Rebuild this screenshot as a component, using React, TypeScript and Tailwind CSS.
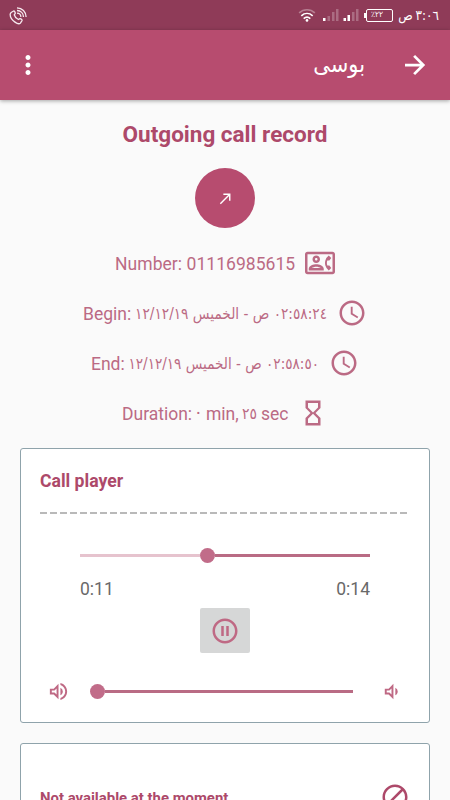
import type { ReactNode } from "react";
import {
  MdBlock,
  MdCallMade,
  MdHourglassEmpty,
  MdMoreVert,
  MdOutlineContactPhone,
  MdPauseCircleOutline,
  MdOutlineVolumeDown,
  MdOutlineVolumeUp,
  MdAccessTime,
} from "react-icons/md";

function Arabic({ children, className }: { children: ReactNode; className: string }) {
  return (
    <span dir="rtl" className={`inline-block whitespace-nowrap font-['DejaVu_Sans',sans-serif] ${className}`}>
      {children}
    </span>
  );
}

function StatusBar() {
  return (
    <div className="flex h-[30px] shrink-0 items-center bg-[#8f3b58] text-white">
      <svg className="ml-[9px] h-[19px] w-[19px]" viewBox="0 0 19 19" fill="none" stroke="#f6e9ee" strokeWidth="1.3">
        <path d="M2.5 6.2 4.6 5c.9-.3 1.8 1.7 1.6 2.5l-1 1.3c.6 2.1 2.2 3.9 4.2 4.7l1.6-.9c.8-.2 2.4 1.2 2 2l-1.600 2.500c-1 1-3.600.3-5.400-1C3.200 14 1 11 1.200 8.200c.1-.8.6-1.500 1.300-2z" strokeLinejoin="round" />
        <path d="M8 7.200c2.200.1 3.800 1.700 3.900 3.800M8 4.500c3.800.1 6.400 2.800 6.500 6.500M8 1.800c5.300.2 8.900 3.900 9.100 9.100" />
      </svg>
      <svg className="ml-[270px] h-[15px] w-[18px] shrink-0" viewBox="0 0 19 15" fill="none" stroke="#fff" strokeWidth="1.700">
        <path d="M1.200 4.800c4.700-4.500 11.900-4.500 16.600 0" opacity=".35" />
        <path d="M3.500 7.800c3.600-3.200 8.400-3.200 12 0M6 10.800c2.200-1.900 4.800-1.900 7 0" />
        <circle cx="9.500" cy="12.700" r="1.400" fill="#fff" stroke="none" />
      </svg>
      <svg className="ml-[6.500px] h-[14px] w-[36px] shrink-0" viewBox="0 0 36 14" fill="#fff">
        <path d="M0 10h2.500v3H0zM20.500 10H23v3h-2.500zM24.500 7H27v6h-2.500z" />
        <path opacity=".25" d="M4.500 8H7v5H4.500zM9 4h2.500v9H9zM13 1h2.500v12H13zM29 4h2.500v9H29zM33 1h2.500v12H33z" />
      </svg>
      <div className="ml-[5px] h-[5px] w-[2px] shrink-0 bg-white" />
      <div className="flex h-[13px] w-[27px] shrink-0 items-center justify-center rounded-[2px] border-[1.5px] border-white pr-1">
        <Arabic className="scale-y-[1.1] text-[7.500px] leading-none">٢٢٪</Arabic>
      </div>
      <div className="flex-1" />
      <Arabic className="mr-[11px] scale-y-[1.15] text-[12px] leading-[30px] [word-spacing:-1px]">٣:٠٦ ص</Arabic>
    </div>
  );
}

function Toolbar() {
  return (
    <header className="flex h-[70px] shrink-0 items-center bg-[#b74c6f] text-white shadow-[0_1px_4px_rgba(0,0,0,0.35)]">
      <MdMoreVert size={30} className="ml-[12.500px]" />
      <div className="flex-1" />
      <Arabic className="mr-[35px] scale-y-[1.1] text-[21px]">بوسى</Arabic>
      <svg viewBox="0 0 24 24" className="mr-5 h-[30px] w-[30px]" fill="none" stroke="currentColor" strokeWidth="2.200">
        <path d="M4 12h15M11.300 4.700 18.600 12l-7.300 7.300" />
      </svg>
    </header>
  );
}

function Slider({ trackClass, playedClass }: { trackClass: string; playedClass: string }) {
  return (
    <div className={`flex h-[15px] items-center ${trackClass}`}>
      <div className={`h-[2.500px] bg-[#e6c3ce] ${playedClass}`} />
      <div className="h-[15px] w-[15px] shrink-0 rounded-full bg-[#c16c89]" />
      <div className="h-[2.500px] flex-1 bg-[#b96b84]" />
    </div>
  );
}

export default function App() {
  return (
    <div className="flex h-[800px] w-[450px] flex-col overflow-hidden bg-[#fafafa] font-[Roboto,sans-serif]">
      <StatusBar />
      <Toolbar />
      <h1 className="mt-[18px] h-8 shrink-0 text-center text-[22.500px] leading-8 font-bold text-[#ad496a]">
        Outgoing call record
      </h1>
      <div className="mx-auto mt-[18px] flex h-[60px] w-[60px] shrink-0 items-center justify-center rounded-full bg-[#b74c6f] text-white">
        <MdCallMade size={17} />
      </div>

      <section className="mt-[10px] shrink-0 text-[17.500px] text-[#bb6a84]">
        <div className="flex h-[50px] items-center pl-[115px]">
          <span className="w-[190px] pt-0.5 whitespace-nowrap tracking-[0.05px]">Number: 01116985615</span>
          <MdOutlineContactPhone size={30} />
        </div>
        <div className="flex h-[50px] items-center pl-[83px]">
          <span className="w-[52px] pt-0.5">Begin:</span>
          <Arabic className="w-[192px] scale-y-[1.15] text-[13.700px]">٠٢:٥٨:٢٤ ص - الخميس ١٢/١٢/١٩</Arabic>
          <MdAccessTime size={30} className="ml-[10px]" />
        </div>
        <div className="flex h-[50px] items-center pl-[91px]">
          <span className="w-[38px] pt-0.5">End:</span>
          <Arabic className="w-[190px] scale-y-[1.15] text-[13.600px]">٠٢:٥٨:٥٠ ص - الخميس ١٢/١٢/١٩</Arabic>
          <MdAccessTime size={30} className="ml-[10px]" />
        </div>
        <div className="flex h-[50px] items-center pl-[122px]">
          <span className="w-[72px] pt-0.5">Duration:</span>
          <Arabic className="w-[9px] text-[17px]">٠</Arabic>
          <span className="ml-[3px] w-[37px] pt-0.5">min,</span>
          <Arabic className="w-[14px] scale-y-[1.15] text-[14px]">٢٥</Arabic>
          <span className="ml-1 w-[37px] pt-0.5">sec</span>
          <MdHourglassEmpty size={30} />
        </div>
      </section>

      <section className="mx-5 mt-[10px] flex h-[275px] shrink-0 flex-col rounded-[3px] border border-[#8fa3ab] bg-white">
        <h2 className="mt-5 ml-[19px] h-6 text-[17.600px] leading-6 font-bold text-[#ad496a]">Call player</h2>
        <div className="mt-[19px] ml-[19px] h-[1.500px] w-[368px] bg-[repeating-linear-gradient(90deg,#b9b9b9_0_7px,transparent_7px_10px)]" />
        <Slider trackClass="mt-[34.500px] mx-[59px]" playedClass="w-[120px]" />
        <div className="mx-[59px] mt-[14px] flex h-6 justify-between text-[17.500px] leading-6 text-[#696969]">
          <span>0:11</span>
          <span>0:14</span>
        </div>
        <button className="mx-auto mt-[7px] flex h-[45px] w-[50px] shrink-0 items-center justify-center rounded-[2px] bg-[#d6d7d7] text-[#bf6984]">
          <MdPauseCircleOutline size={30} />
        </button>
        <div className="mt-[27px] flex h-[23px] items-center text-[#bf6984]">
          <MdOutlineVolumeUp size={23} className="ml-[26px]" />
          <Slider trackClass="ml-[19.500px] w-[263.500px]" playedClass="w-0" />
          <MdOutlineVolumeDown size={23} className="ml-[27px]" />
        </div>
      </section>

      <section className="mx-5 mt-5 h-[120px] shrink-0 rounded-[3px] border border-[#8fa3ab] bg-white">
        <div className="mt-[38px] ml-[19px] mr-[19px] flex h-[30px] items-center justify-between text-[#ad496a]">
          <span className="pt-0.5 text-[14.900px] font-bold">Not available at the moment</span>
          <MdBlock size={30} />
        </div>
      </section>
    </div>
  );
}
